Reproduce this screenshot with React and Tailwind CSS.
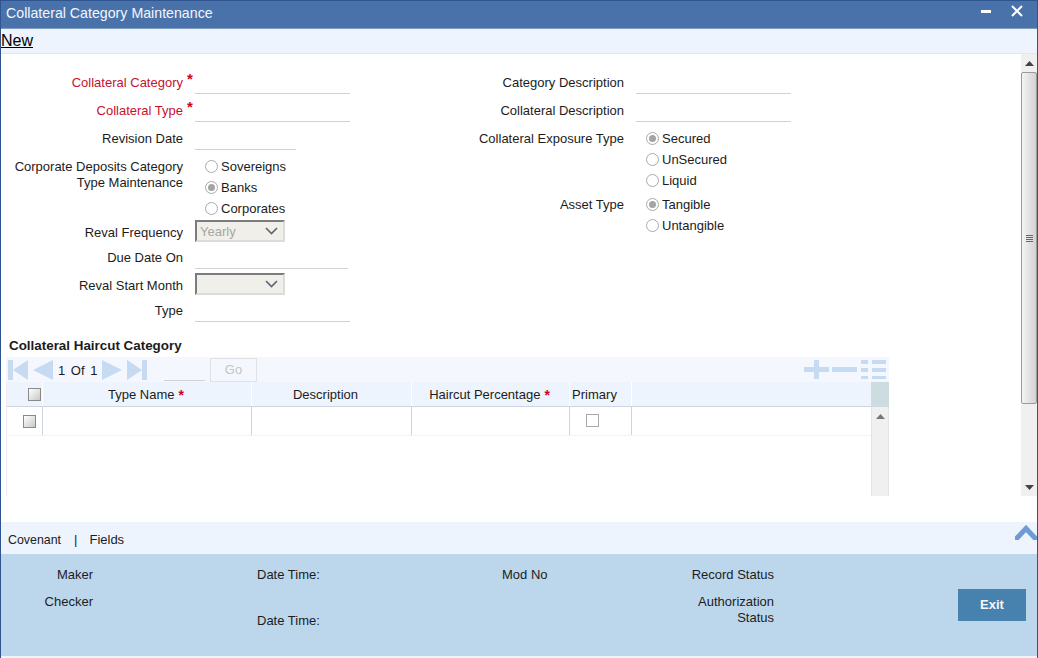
const columns = [
  { name: "Type Name", width: "w-[209px]", required: true, pad: "pr-[2px]" },
  { name: "Description", width: "w-[160px]", pad: "pr-3" },
  { name: "Haircut Percentage", width: "w-[158px]", required: true, pad: "pr-[2px]" },
  { name: "Primary", width: "w-[62px]", pad: "pr-3" },
];

function TextRow({ label, required, lineWidth = "w-[155px]", height = "h-[28px]" }) {
  return (
    <div className={`flex ${height}`}>
      <div className={`w-[182px] self-end pb-[3px] text-right leading-4 ${required ? "text-[#c8102e]" : ""}`}>{label}</div>
      <div className="relative ml-3">
        {required && <span className="absolute left-[-8px] top-[5px] text-[15px] font-bold leading-4 text-[#d0021b]">*</span>}
        <div className={`h-full border-b border-[#d2d2d2] ${lineWidth}`} />
      </div>
    </div>
  );
}

function Radio({ label, checked }) {
  return (
    <div className="flex h-[21px] items-center">
      <span className="flex h-[13px] w-[13px] items-center justify-center rounded-full border border-[#aaaaaa] bg-white">
        {checked && <span className="h-[7px] w-[7px] rounded-full bg-[#a4a4a4]" />}
      </span>
      <span className="ml-[3px]">{label}</span>
    </div>
  );
}

function SelectBox({ value }) {
  return (
    <div className="-mt-px flex h-[22px] w-[90px] items-center justify-between border-2 border-t-[#7c7c7c] border-l-[#7c7c7c] border-r-[#dcdcd8] border-b-[#dcdcd8] bg-[#f0efe9] pl-[3px] pr-1 text-[#a6a6a6]">
      <span className="pt-px leading-4">{value}</span>
      <svg width="13" height="8" viewBox="0 0 13 8" className="mr-[1px]">
        <path d="M1 1l5.5 5.5L12 1" fill="none" stroke="#5c6670" strokeWidth="1.6" />
      </svg>
    </div>
  );
}

function Checkbox({ className = "" }) {
  return <span className={`block h-[13px] w-[13px] border border-[#8a8a8a] bg-gradient-to-br from-white to-[#c8c8c8] ${className}`} />;
}

function Triangle({ dir }) {
  return (
    <svg width="20" height="20" viewBox="0 0 20 20">
      <path d={dir === "left" ? "M20 0v20L0 10z" : "M0 0v20l20-10z"} fill="#c6daf1" />
    </svg>
  );
}

function EdgeTriangle({ dir }) {
  return (
    <svg width="20" height="20" viewBox="0 0 20 20">
      <path d={dir === "left" ? "M0 0h5v20H0zM20 0v20L5 10z" : "M20 0h-5v20h5zM0 0v20l15-10z"} fill="#c6daf1" />
    </svg>
  );
}

function Arrow({ down, color = "#444444" }) {
  return (
    <svg width="9" height="5" viewBox="0 0 9 5">
      <path d={down ? "M0 0h9L4.5 5z" : "M0 5h9L4.5 0z"} fill={color} />
    </svg>
  );
}

export default function App() {
  return (
    <div className="flex h-[658px] w-[1038px] flex-col overflow-hidden border-x border-x-[#2f5590] bg-white font-['Liberation_Sans',Arial,sans-serif] text-[13px] leading-4 text-[#1c1c1c]">
      {/* title bar */}
      <div className="flex h-[29px] shrink-0 items-center justify-between border-t border-b border-t-[#2f5590] border-b-[#7f9dbb] bg-[#4a72aa] pl-[5px] pr-[14px]">
        <span className="mb-[3px] text-[14.2px] text-[#f2f6fb]">Collateral Category Maintenance</span>
        <div className="flex items-start gap-[20px]">
          <span className="mt-[5px] h-[3px] w-[10px] bg-white" />
          <svg width="12" height="12" viewBox="0 0 12 12" className="mb-[8px]">
            <path d="M1 1l10 10M11 1L1 11" stroke="white" strokeWidth="2" />
          </svg>
        </div>
      </div>
      <div className="flex h-[25px] shrink-0 items-center border-b border-[#e3e6ea] bg-[#edf4fd] text-[16px] text-black">
        <span className="underline">New</span>
      </div>

      {/* scrolling form */}
      <div className="flex h-[442px] shrink-0">
        <div className="w-[1020px] pt-3">
          <div className="flex h-[271px]">
            <div className="w-[473px]">
              <TextRow label="Collateral Category" required />
              <TextRow label="Collateral Type" required />
              <TextRow label="Revision Date" lineWidth="w-[101px]" />
              <div className="mt-[6px] flex">
                <div className="mt-[3px] w-[182px] text-right">
                  Corporate Deposits Category
                  <br />
                  Type Maintenance
                </div>
                <div className="ml-[22px]">
                  <Radio label="Sovereigns" />
                  <Radio label="Banks" checked />
                  <Radio label="Corporates" />
                </div>
              </div>
              <div className="mt-[2px] flex h-[21px] items-center">
                <div className="mt-[2px] w-[182px] text-right">Reval Frequency</div>
                <div className="ml-3"><SelectBox value="Yearly" /></div>
              </div>
              <TextRow label="Due Date On" lineWidth="w-[153px]" height="h-[27px]" />
              <div className="mt-[5px] flex h-[21px] items-center">
                <div className="mt-[2px] w-[182px] text-right">Reval Start Month</div>
                <div className="ml-3"><SelectBox value="" /></div>
              </div>
              <TextRow label="Type" height="h-[27px]" />
            </div>

            <div>
              <div className="flex h-[28px]">
                <div className="w-[150px] self-end pb-[3px] text-right">Category Description</div>
                <div className="ml-3 w-[155px] border-b border-[#d2d2d2]" />
              </div>
              <div className="flex h-[28px]">
                <div className="w-[150px] self-end pb-[3px] text-right">Collateral Description</div>
                <div className="ml-3 w-[155px] border-b border-[#d2d2d2]" />
              </div>
              <div className="mt-[6px] flex">
                <div className="mt-[3px] w-[150px] whitespace-nowrap text-right">Collateral Exposure Type</div>
                <div className="ml-[22px]">
                  <Radio label="Secured" checked />
                  <Radio label="UnSecured" />
                  <Radio label="Liquid" />
                </div>
              </div>
              <div className="mt-[3px] flex">
                <div className="mt-[3px] w-[150px] text-right">Asset Type</div>
                <div className="ml-[22px]">
                  <Radio label="Tangible" checked />
                  <Radio label="Untangible" />
                </div>
              </div>
            </div>
          </div>

          {/* haircut grid */}
          <div className="ml-2 mt-px h-[16px] text-[13.4px] font-bold">Collateral Haircut Category</div>
          <div className="ml-[5px] mt-[3px] w-[883px]">
            <div className="flex h-[25px] items-center bg-[#f4f8fe] pl-[2px]">
              <EdgeTriangle dir="left" />
              <span className="ml-[5px]"><Triangle dir="left" /></span>
              <span className="ml-[5px] mt-[2px] w-[44px] [word-spacing:2px]">1 Of 1</span>
              <Triangle dir="right" />
              <span className="ml-[5px]"><EdgeTriangle dir="right" /></span>
              <span className="ml-[17px] mt-[22px] w-[41px] border-b border-[#d2d2d2]" />
              <span className="ml-[5px] flex h-[24px] w-[47px] items-center justify-center border border-[#dfe3e8] text-[#c4c4c4]">Go</span>
              <div className="ml-auto mr-[3px] flex items-center gap-[3px]">
                <svg width="25" height="19" viewBox="0 0 25 19">
                  <path d="M0 7h10V0h5v7h10v5H15v7h-5v-7H0z" fill="#c6daf1" />
                </svg>
                <span className="h-[5px] w-[25px] bg-[#c6daf1]" />
                <svg width="25" height="19" viewBox="0 0 25 19" className="ml-px">
                  <path d="M0 0h7v4H0zM11 0h14v4H11zM0 8h7v4H0zM11 8h14v4H11zM0 16h7v3H0zM11 16h14v3H11z" fill="#c6daf1" />
                </svg>
              </div>
            </div>

            <div className="flex">
              <div className="w-[865px] border-l border-[#ededed]">
                <div className="flex h-[25px] border-b border-[#ccd4e0] bg-[#edf4fd]">
                  <div className="flex w-[35px] items-center justify-end pr-[1px]"><Checkbox /></div>
                  {columns.map((col) => (
                    <div key={col.name} className={`flex items-center justify-center border-l border-white pt-px ${col.width} ${col.pad}`}>
                      {col.name}
                      {col.required && <span className="ml-1 text-[14px] font-bold leading-3 text-[#d0021b]">*</span>}
                    </div>
                  ))}
                  <div className="flex-1 border-l border-white" />
                </div>
                <div className="flex h-[29px] border-b border-[#f8f2ea]">
                  <div className="flex w-[35px] items-center pl-[16px]"><Checkbox /></div>
                  {columns.map((col) => (
                    <div key={col.name} className={`flex items-center justify-center border-l border-[#ccd4e0] ${col.width}`}>
                      {col.name === "Primary" && <span className="mb-[2px] mr-4 block h-[13px] w-[13px] border border-[#a8a8a8] bg-white" />}
                    </div>
                  ))}
                  <div className="flex-1 border-l border-[#ccd4e0]" />
                </div>
              </div>
              <div className="w-[18px]">
                <div className="h-[25px] bg-[#ccdcdf]" />
                <div className="flex h-[89px] justify-center border-x border-x-[#e4e4e4] bg-[#f0f0f0] pt-[7px]">
                  <Arrow color="#777777" />
                </div>
              </div>
            </div>
          </div>
        </div>

        {/* page scrollbar */}
        <div className="flex w-[16px] flex-col bg-[#f0f0f0]">
          <div className="flex h-[18px] items-center justify-center"><Arrow /></div>
          <div className="flex h-[332px] items-center justify-center rounded-[2px] border border-[#9a9a9a] bg-gradient-to-r from-[#f4f4f4] to-[#d2d2d2]">
            <span className="h-[7px] w-[7px] border-y-[3px] border-double border-[#666666]" />
          </div>
          <div className="flex flex-1 items-end justify-center pb-[6px]"><Arrow down /></div>
        </div>
      </div>

      <div className="h-[26px] shrink-0" />

      {/* tabs */}
      <div className="flex h-[32px] shrink-0 items-center bg-[#edf4fd] pl-[7px]">
        <span className="mt-[3px] text-[12.4px]">Covenant</span>
        <span className="ml-[13px] mt-[3px] text-[#222222]">|</span>
        <span className="ml-[12px] mt-[3px]">Fields</span>
        <svg width="22" height="15" viewBox="0 0 22 15" className="mb-[11px] ml-auto">
          <path d="M2 13L11 3.5 20 13" fill="none" stroke="#6f9bd4" strokeWidth="5" strokeLinecap="round" />
        </svg>
      </div>

      {/* audit footer */}
      <div className="flex h-[102px] shrink-0 bg-[#bcd7ec] pt-3">
        <div className="w-[92px] text-right">
          <div className="h-[28px] pt-px">Maker</div>
          <div>Checker</div>
        </div>
        <div className="ml-[164px] w-[245px]">
          <div className="h-[47px] pt-px">Date Time:</div>
          <div>Date Time:</div>
        </div>
        <div className="w-[100px] pt-px">Mod No</div>
        <div className="ml-[35px] w-[137px] text-right">
          <div className="h-[28px] pt-px">Record Status</div>
          <div>
            Authorization
            <br />
            Status
          </div>
        </div>
        <button type="button" className="ml-[184px] mt-[23px] h-[32px] w-[68px] bg-[#4682ad] text-[13px] font-bold text-[#f2f8fc]">
          Exit
        </button>
      </div>
      <div className="h-[2px] shrink-0 bg-[#f0f4f8]" />
    </div>
  );
}
